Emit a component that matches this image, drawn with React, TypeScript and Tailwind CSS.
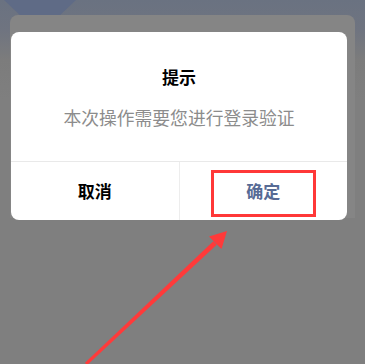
export default function App() {
  return (
    <div
      className="relative w-[365px] h-[364px] overflow-hidden bg-[#7f7f7f]"
      style={{ fontFamily: '"Noto Sans CJK SC", "Noto Sans", sans-serif' }}
    >
      {/* page behind the mask */}
      <div className="h-full bg-[linear-gradient(180deg,#6a7281_0px,#6f7480_30px,#7c7c7c_60px,#7f7f7f_100px)]">
        <div className="relative h-[15px]">
          <div className="absolute left-[4px] top-0 h-[15px] w-[72px] bg-[#5f6b86] [clip-path:polygon(0_0,100%_0,78%_100%,22%_100%)]" />
        </div>
        <div className="mx-[10px] h-[203px] rounded-t-[8px] bg-[#858585]" />
      </div>

      {/* dialog */}
      <div className="absolute left-[11px] top-[32px] w-[336px] rounded-[8px] bg-white">
        <div className="flex h-[129px] flex-col items-center">
          <div className="mt-[33px] text-[17px] font-bold leading-[24px] text-black">提示</div>
          <div className="mt-[16px] whitespace-nowrap text-[17.8px] leading-[24px] text-[#8c8c8c]">本次操作需要您进行登录验证</div>
        </div>
        <div className="flex h-[59px] border-t border-[#e9e9e9]">
          <div className="flex flex-1 items-center justify-center text-[17px] font-bold text-black">取消</div>
          <div className="flex flex-1 items-center justify-center border-l border-[#ededed] text-[17px] font-bold text-[#576b95]">确定</div>
        </div>
        <div className="absolute left-[200px] top-[138px] h-[47px] w-[105px] border-[3px] border-[#ff3838]" />
      </div>

      {/* arrow */}
      <svg className="absolute left-0 top-0" width="365" height="364" viewBox="0 0 365 364">
        <polygon points="87,365.2 85,362.8 213.3,241.2 216.7,244.8" fill="#ff3a3a" />
        <polygon points="227,231 209,236.5 221.5,249" fill="#ff3a3a" />
      </svg>
    </div>
  );
}
